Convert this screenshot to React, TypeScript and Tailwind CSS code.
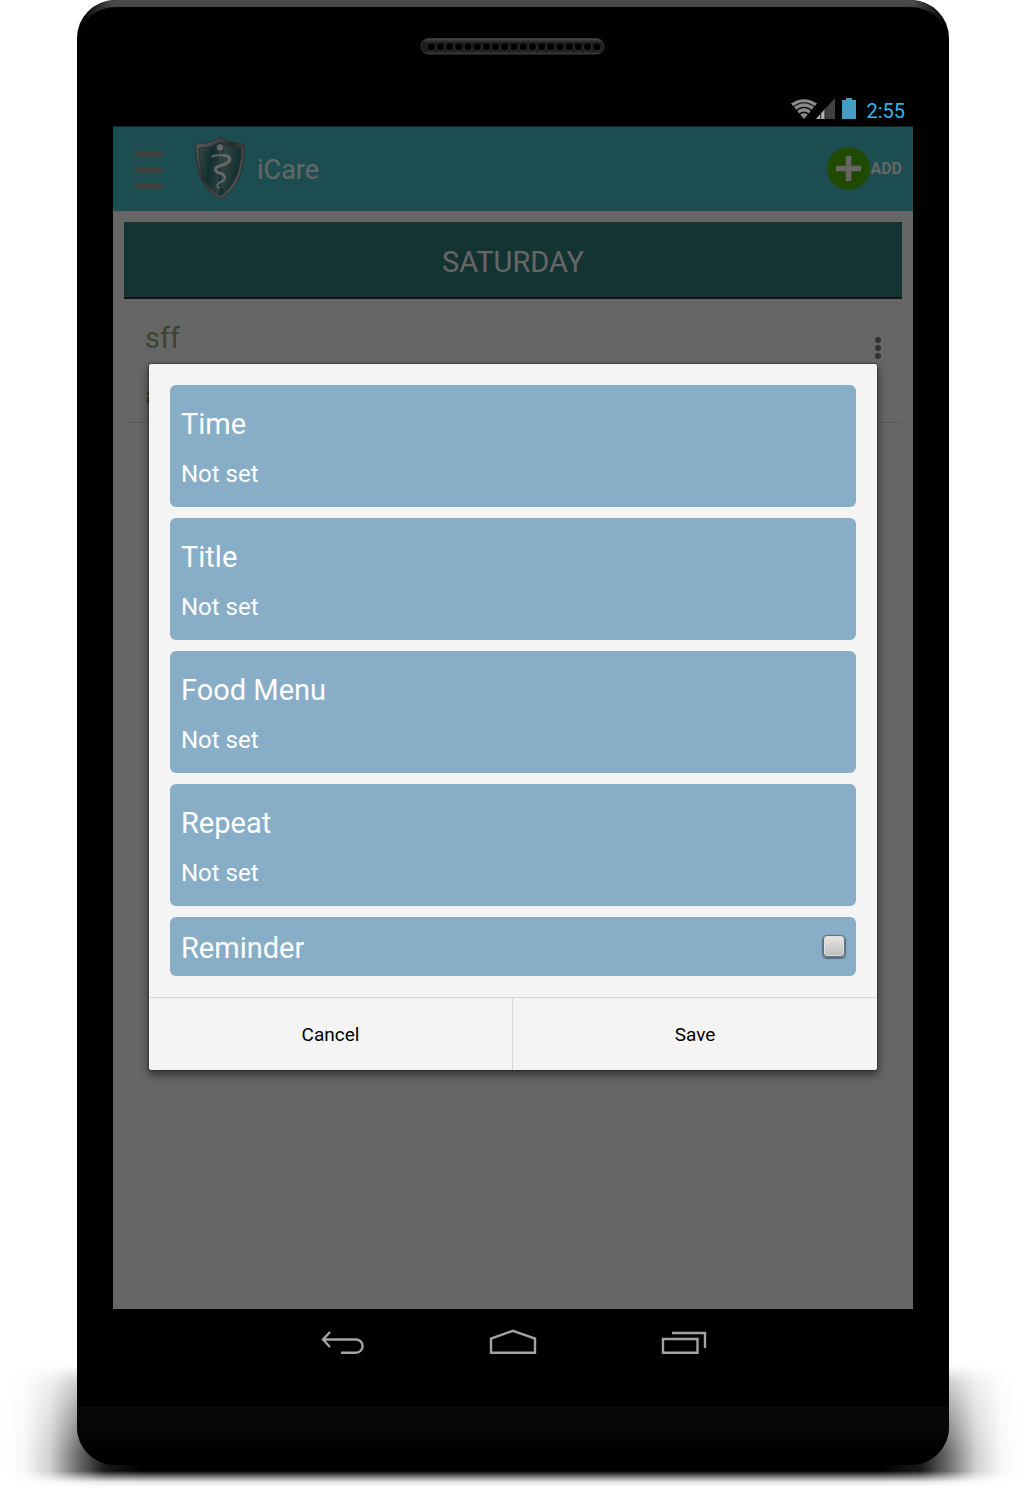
import React, { useState } from "react";

function Speaker() {
  return (
    <svg width="186" height="18" viewBox="0 0 186 18" aria-hidden="true">
      <defs>
        <linearGradient id="speakerRim" x1="0" y1="0" x2="0" y2="1">
          <stop offset="0" stopColor="#4a4a4a" />
          <stop offset="0.3" stopColor="#1c1c1c" />
          <stop offset="0.8" stopColor="#181818" />
          <stop offset="1" stopColor="#3c3c3c" />
        </linearGradient>
      </defs>
      <rect x="1" y="1.5" width="183" height="15.5" rx="7.7" fill="url(#speakerRim)" stroke="#383838" />
      {Array.from({ length: 19 }, (_, i) => (
        <g key={i}>
          <circle cx={11.2 + i * 9.2} cy="10.4" r="4.1" fill="#3d3d3d" />
          <circle cx={11.2 + i * 9.2} cy="9.9" r="3.6" fill="#000" />
        </g>
      ))}
    </svg>
  );
}

function StatusIcons() {
  return (
    <svg width="68" height="24" viewBox="0 0 68 24" aria-hidden="true">
      <g transform="translate(13 21)">
        <path d="M0 0 L-13 -15.5 Q0 -24 13 -15.5 Z" fill="#8a8a8a" />
        <g fill="none" stroke="#000" strokeWidth="1.2">
          <path d="M-11.5 -11.5 Q0 -21 11.5 -11.5" />
          <path d="M-8.5 -7.7 Q0 -15.5 8.5 -7.7" />
          <path d="M-5.5 -4 Q0 -9.5 5.5 -4" />
        </g>
      </g>
      <path d="M44 0 V21 H25 Z" fill="#404040" />
      <path d="M34 11 V21 H25 Z" fill="#b0b0b0" />
      <path d="M29.7 13 V21 M34 10 V21" stroke="#222" strokeWidth="1" />
      <path d="M55 0 H61 V2 H65 V21 H51 V2 H55 Z" fill="#459dc4" />
    </svg>
  );
}

function ShieldLogo() {
  return (
    <svg width="50" height="64" viewBox="0 0 50 64" aria-hidden="true">
      <defs>
        <linearGradient id="shieldRim" x1="0" y1="0" x2="1" y2="1">
          <stop offset="0" stopColor="#eee" />
          <stop offset="0.25" stopColor="#b0b0b0" />
          <stop offset="0.42" stopColor="#6a6a6a" />
          <stop offset="0.6" stopColor="#aaa" />
          <stop offset="1" stopColor="#eee" />
        </linearGradient>
        <linearGradient id="shieldFace" x1="0" y1="0" x2="1" y2="0.25">
          <stop offset="0" stopColor="#94b5b4" />
          <stop offset="0.35" stopColor="#2c7573" />
          <stop offset="0.65" stopColor="#7ba6a5" />
          <stop offset="1" stopColor="#2c7573" />
        </linearGradient>
      </defs>
      <path d="M25 1 C18 6 9 8 1 8 C0 31 6 53 25 63 C44 53 50 31 49 8 C41 8 32 6 25 1 Z" fill="url(#shieldRim)" stroke="#666" strokeWidth="0.8" />
      <path d="M25 6 C19 10 12 12 4 12 C4 32 10 51 25 60 C40 51 46 32 46 12 C38 12 31 10 25 6 Z" fill="url(#shieldFace)" stroke="#2a7774" strokeWidth="0.8" />
      <path d="M25 14 V59" stroke="#006e6a" strokeWidth="1.2" />
      <circle cx="25" cy="11.5" r="3.2" fill="#fff" />
      <path d="M25 14 V33" stroke="#ccc" strokeWidth="1" />
      <g fill="none" stroke="#fff" strokeLinecap="round">
        <path d="M17 21 C19 18 25 19 30 19.5" strokeWidth="1.8" />
        <path d="M29 19.5 C36 20 37 25 29 28.5 C18 31 18 35 27 38" strokeWidth="3.2" />
        <path d="M27 38 C32 41 30 44 26 46" strokeWidth="2.4" />
        <path d="M26 46 C21 48 21 51 25 52" strokeWidth="1.6" />
      </g>
      <path d="M25 52 C30 54 28 57 25 58" fill="none" stroke="#006e6a" strokeWidth="1.3" />
    </svg>
  );
}

function AppScreen() {
  return (
    <div aria-hidden="true">
      <header className="flex h-[85px] items-center border-t border-[#205f63] bg-[#46c0c8] pr-[11px] pb-0.5 pl-[22px] text-white">
        <button type="button" tabIndex={-1} aria-label="Menu" className="mt-1 flex w-[27px] flex-col gap-[10px]">
          <span className="h-[6px] w-full bg-[#a0a0a0]" />
          <span className="h-[6px] w-full bg-[#a0a0a0]" />
          <span className="h-[6px] w-full bg-[#a0a0a0]" />
        </button>
        <div className="ml-[33px]">
          <ShieldLogo />
        </div>
        <h1 className="ml-3 pt-1 text-[27px] leading-8">iCare</h1>
        <button type="button" tabIndex={-1} className="ml-auto flex items-center text-base font-bold">
          <svg width="43" height="43" viewBox="0 0 43 43">
            <circle cx="21.5" cy="21.5" r="21.5" fill="#52b900" />
            <path d="M21.5 9 V34 M9 21.5 H34" stroke="#fff" strokeWidth="5.5" />
          </svg>
          <span className="pt-0.5">ADD</span>
        </button>
      </header>
      <main className="px-[11px] pt-[11px]">
        <h2 className="flex h-[77px] items-center justify-center border-b-2 border-[#333] bg-[#328080] pt-1.5 text-[29px] text-white">
          SATURDAY
        </h2>
        <article className="flex h-[124px] items-start justify-between border-b border-[#dcdcdc] pt-[21px] pr-5 pl-[21px] text-[#96aa82]">
          <div>
            <h3 className="text-[29px] leading-9">sff</h3>
            <p className="mt-6 text-2xl leading-8">a</p>
          </div>
          <button type="button" tabIndex={-1} aria-label="More options" className="mt-4">
            <svg width="8" height="24" viewBox="0 0 8 24" fill="#808080">
              <circle cx="4" cy="4" r="3" />
              <circle cx="4" cy="12" r="3" />
              <circle cx="4" cy="20" r="3" />
            </svg>
          </button>
        </article>
      </main>
    </div>
  );
}

const fields = ["Time", "Title", "Food Menu", "Repeat"];

function ReminderDialog() {
  const [remind, setRemind] = useState(false);
  return (
    <section
      role="dialog"
      aria-label="Add meal"
      className="w-full rounded-[2px] bg-[#f4f4f4] shadow-[0_0_1px_1px_rgba(0,0,0,0.25),0_4px_8px_1px_rgba(0,0,0,0.5)]"
    >
      <div className="flex flex-col gap-[11px] p-[21px]">
        {fields.map((name) => (
          <button
            key={name}
            type="button"
            className="flex flex-col items-start gap-4 rounded-md bg-[#87adc7] px-[11px] pt-[21px] pb-[17px] text-white"
          >
            <span className="text-[29px] leading-9">{name}</span>
            <span className="text-2xl leading-8">Not set</span>
          </button>
        ))}
        <label className="flex h-[59px] items-center justify-between rounded-md bg-[#87adc7] px-[11px] text-[29px] leading-9 text-white">
          <span className="pt-1">Reminder</span>
          <input
            type="checkbox"
            checked={remind}
            onChange={(e) => setRemind(e.target.checked)}
            className="size-[22px] appearance-none rounded border border-[#66737c] bg-linear-to-b from-[#e6e6e6] to-[#bdbdbd] shadow-[inset_0_0_0_1px_#dedede,0_1px_1px_1px_rgba(0,0,0,0.35)] checked:from-[#33b5e5] checked:to-[#1b8ab5]"
          />
        </label>
      </div>
      <div className="grid grid-cols-2 divide-x divide-[#d6d6d6] border-t border-[#d6d6d6] text-[19px] leading-6 text-black">
        <button type="button" className="h-[72px] pt-0.5">Cancel</button>
        <button type="button" className="h-[72px] pt-0.5">Save</button>
      </div>
    </section>
  );
}

function NavigationBar() {
  return (
    <nav className="flex h-[98px] justify-center pb-[30px]">
      <button type="button" aria-label="Back" className="flex w-[171px] items-center justify-center">
        <svg width="44" height="28" viewBox="0 0 44 28" fill="none" stroke="#a3a3a3" strokeWidth="2.4">
          <path d="M10 3 L3 10.5 L10 18 M3 10.5 H36 A6.5 6.5 0 0 1 36 23.7 H21" />
        </svg>
      </button>
      <button type="button" aria-label="Home" className="flex w-[171px] items-center justify-center">
        <svg width="48" height="28" viewBox="0 0 48 28" fill="none" stroke="#a3a3a3" strokeWidth="2.4">
          <path d="M2 23.8 V9.5 L24 1.8 L46 9.5 V23.8 Z" />
        </svg>
      </button>
      <button type="button" aria-label="Recent apps" className="flex w-[171px] items-center justify-center">
        <svg width="46" height="28" viewBox="0 0 46 28" fill="none" stroke="#a3a3a3" strokeWidth="2.4">
          <path d="M2 10 H36.5 V23.8 H2 Z M11 4 H44 V19" />
        </svg>
      </button>
    </nav>
  );
}

export default function App() {
  return (
    <div className="overflow-hidden bg-white pr-[76px] pb-[25px] pl-[77px] font-[Roboto,sans-serif]">
      <div className="relative mx-auto max-w-[872px]">
        <div className="absolute -right-[72px] -bottom-[22px] -left-[72px] h-[122px] bg-[linear-gradient(to_right,transparent_0,rgba(0,0,0,0.03)_20px,rgba(0,0,0,0.18)_45px,rgba(0,0,0,0.6)_75px,rgba(0,0,0,0.9)_100px,black_140px,black_calc(100%-140px),rgba(0,0,0,0.9)_calc(100%-100px),rgba(0,0,0,0.6)_calc(100%-75px),rgba(0,0,0,0.18)_calc(100%-45px),rgba(0,0,0,0.03)_calc(100%-20px),transparent_100%)] [mask-image:linear-gradient(to_bottom,transparent_0,rgba(0,0,0,0.35)_18px,rgba(0,0,0,0.7)_55px,black_88px,black_106px,rgba(0,0,0,0.5)_112px,rgba(0,0,0,0.1)_117px,transparent_122px)]" />
        <div className="relative overflow-hidden rounded-[38px] bg-black">
          <div className="absolute inset-x-0 top-0 h-20 rounded-t-[38px] shadow-[inset_0_7px_1px_#4a4a4a] [mask-image:linear-gradient(to_right,transparent_2px,black_36px,black_calc(100%-36px),transparent_calc(100%-2px))]" />
          <div className="flex h-[94px] justify-center pt-[37px]">
            <Speaker />
          </div>
          <div className="flex h-8 items-center justify-end gap-[7px] px-[44px] text-[#33b5e5]">
            <StatusIcons />
            <time className="pt-0.5 text-xl leading-8">2:55</time>
          </div>
          <div className="relative mx-9 min-h-[1183px] bg-white">
            <AppScreen />
            <div className="absolute inset-0 flex items-center bg-black/60 px-9 pb-0.5">
              <ReminderDialog />
            </div>
          </div>
          <NavigationBar />
          <div className="h-[58px] bg-linear-to-b from-[#080808] via-[#060606] to-black" />
        </div>
      </div>
    </div>
  );
}
